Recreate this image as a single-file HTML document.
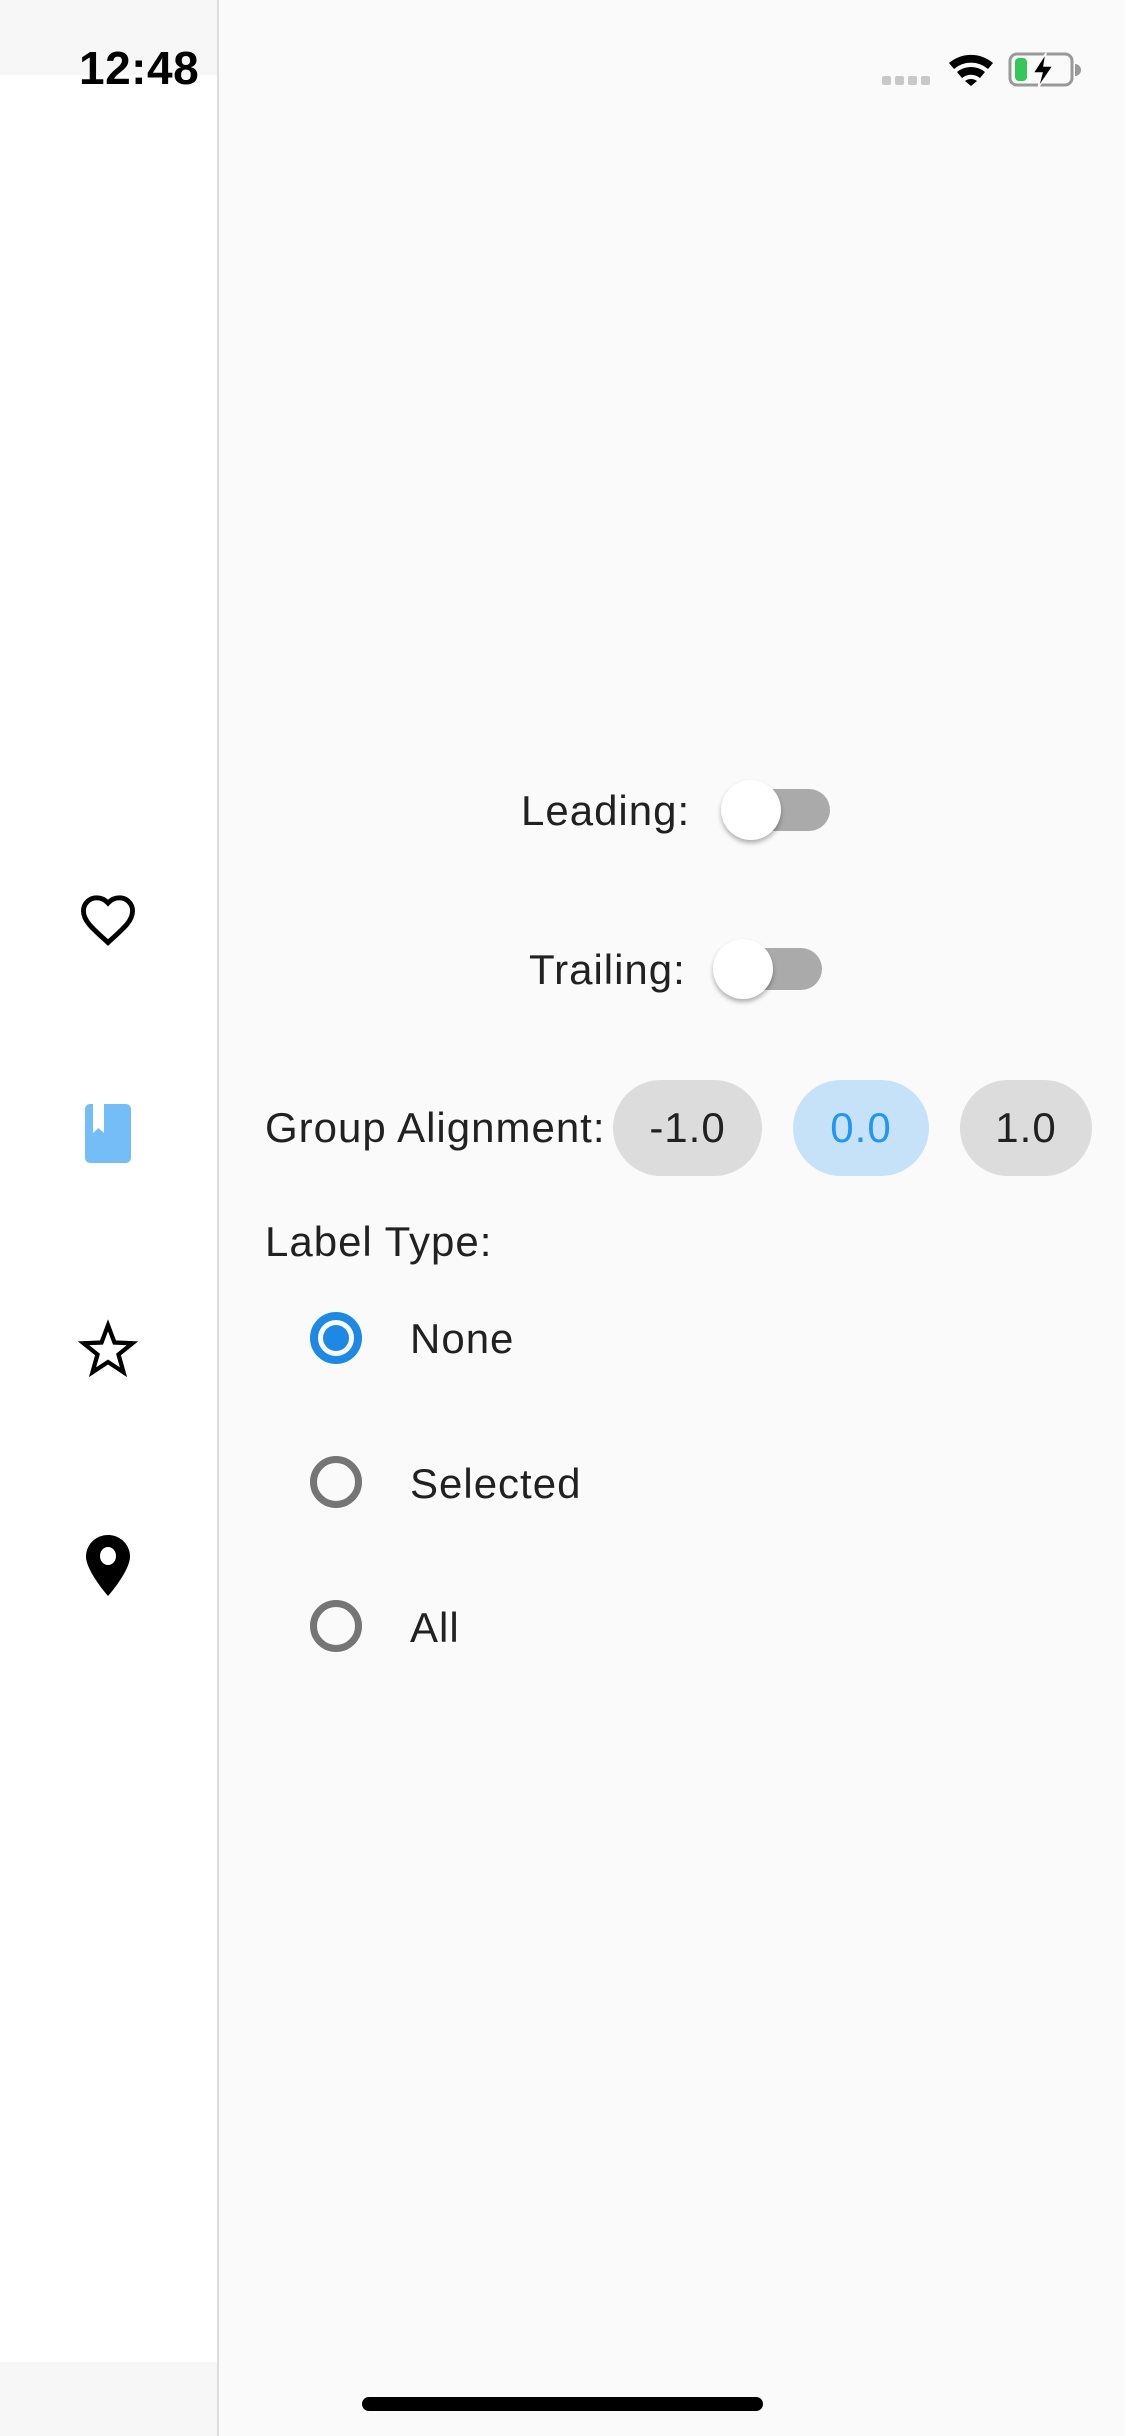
<!DOCTYPE html>
<html><head><meta charset="utf-8"><style>
html,body{margin:0;padding:0;width:1125px;height:2436px;overflow:hidden;background:#fafafa;font-family:"Liberation Sans",sans-serif;color:#212121}
.abs{position:absolute}
.t{position:absolute;font-size:42px;letter-spacing:1px;white-space:nowrap;line-height:1}
</style></head><body>
<div class="abs" style="left:0;top:0;width:217px;height:2436px;background:#fff"></div>
<div class="abs" style="left:0;top:0;width:217px;height:75px;background:#f7f7f7"></div>
<div class="abs" style="left:0;top:2362px;width:217px;height:74px;background:#f7f7f7"></div>
<div class="abs" style="left:217px;top:0;width:2px;height:2436px;background:#dcdcdc"></div>

<div class="t" style="left:79px;top:45px;font-size:46px;letter-spacing:0.5px;font-weight:bold;color:#000">12:48</div>
<svg class="abs" style="left:880px;top:50px" width="205" height="40" viewBox="880 50 205 40">
<g fill="#c8c8c8"><rect x="882" y="76" width="9" height="9" rx="2"/><rect x="895" y="76" width="9" height="9" rx="2"/><rect x="908" y="76" width="9" height="9" rx="2"/><rect x="921" y="76" width="9" height="9" rx="2"/></g>
<path d="M949 63 A34 34 0 0 1 993 63 L988 69 A26 26 0 0 0 954 69Z M957 72 A22 22 0 0 1 985 72 L980 78 A14 14 0 0 0 962 78Z M965 81 A10 10 0 0 1 977 81 L971 86Z" fill="#000"/>
<rect x="1010" y="54" width="62" height="31" rx="7" fill="none" stroke="#999" stroke-width="3"/>
<path d="M1075 64 a5 5 0 0 1 0 12z" fill="#999"/>
<rect x="1015" y="58" width="12" height="23" rx="4" fill="#34c759"/>
<path d="M1046 53 L1033 73 L1042 73 L1038 88 L1053 66 L1044 66 Z" fill="#000" stroke="#fafafa" stroke-width="1.5"/>
</svg>

<svg class="abs" style="left:77px;top:889px" width="62" height="58" viewBox="0 0 24 22"><path d="M12 20.5l-1.3-1.2C5.6 14.7 2.5 11.9 2.5 8.3 2.5 5.4 4.8 3.2 7.6 3.2c1.7 0 3.3.8 4.4 2 1.1-1.2 2.7-2 4.4-2 2.8 0 5.1 2.2 5.1 5.1 0 3.6-3.1 6.4-8.2 11L12 20.5z" fill="none" stroke="#000" stroke-width="1.9"/></svg>
<svg class="abs" style="left:85px;top:1104px" width="46" height="59" viewBox="0 0 46 59"><rect width="46" height="59" rx="5" fill="#74bdf7"/><path d="M8 0 h11 v29 l-5.5-5 -5.5 5z" fill="#fff"/></svg>
<svg class="abs" style="left:78px;top:1319px" width="60" height="60" viewBox="0 0 24 24"><path d="M12 2.5l2.6 6.9 7.2.3-5.6 4.5 2 7.1L12 17.2l-6.2 4.1 2-7.1-5.6-4.5 7.2-.3z" fill="none" stroke="#000" stroke-width="1.7" stroke-linejoin="miter"/></svg>
<svg class="abs" style="left:86px;top:1535px" width="44" height="61" viewBox="0 0 44 61"><path d="M22 0C10 0 0 9.5 0 21.5 0 36 22 61 22 61S44 36 44 21.5C44 9.5 34 0 22 0z" fill="#000"/><ellipse cx="22" cy="21" rx="8" ry="9" fill="#fff"/></svg>

<div class="t" style="left:521px;top:790px">Leading:</div>
<div class="abs" style="left:735px;top:789px;width:95px;height:42px;border-radius:21px;background:#aaa"></div>
<div class="abs" style="left:721px;top:780px;width:60px;height:60px;border-radius:50%;background:#fff;box-shadow:0 3px 5px rgba(0,0,0,.3)"></div>

<div class="t" style="left:529px;top:949px">Trailing:</div>
<div class="abs" style="left:727px;top:948px;width:95px;height:42px;border-radius:21px;background:#aaa"></div>
<div class="abs" style="left:713px;top:939px;width:60px;height:60px;border-radius:50%;background:#fff;box-shadow:0 3px 5px rgba(0,0,0,.3)"></div>

<div class="t" style="left:265px;top:1107px">Group Alignment:</div>
<div class="abs" style="left:613px;top:1080px;width:149px;height:96px;border-radius:48px;background:#dcdcdc"></div>
<div class="t" style="left:613px;top:1107px;width:149px;text-align:center">-1.0</div>
<div class="abs" style="left:793px;top:1080px;width:136px;height:96px;border-radius:48px;background:#c6e2f8"></div>
<div class="t" style="left:793px;top:1107px;width:136px;text-align:center;color:#2196f3">0.0</div>
<div class="abs" style="left:960px;top:1080px;width:132px;height:96px;border-radius:48px;background:#dcdcdc"></div>
<div class="t" style="left:960px;top:1107px;width:132px;text-align:center">1.0</div>

<div class="t" style="left:265px;top:1221px">Label Type:</div>

<div class="abs" style="left:310px;top:1312px;width:36px;height:36px;border:8px solid #1e88e5;border-radius:50%"></div>
<div class="abs" style="left:323px;top:1325px;width:26px;height:26px;background:#1e88e5;border-radius:50%"></div>
<div class="t" style="left:410px;top:1318px">None</div>

<div class="abs" style="left:310px;top:1456px;width:38px;height:38px;border:7px solid #757575;border-radius:50%"></div>
<div class="t" style="left:410px;top:1463px">Selected</div>

<div class="abs" style="left:310px;top:1600px;width:38px;height:38px;border:7px solid #757575;border-radius:50%"></div>
<div class="t" style="left:410px;top:1607px">All</div>

<div class="abs" style="left:362px;top:2397px;width:401px;height:14px;border-radius:7px;background:#000"></div>
</body></html>
